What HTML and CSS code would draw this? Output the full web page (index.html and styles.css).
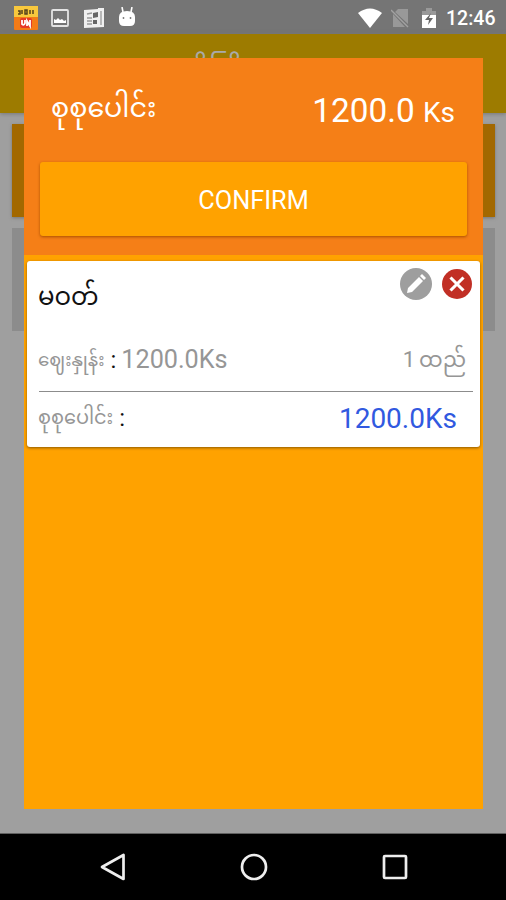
FILE: index.html
```html
<!DOCTYPE html>
<html lang="my">
<head>
<meta charset="utf-8">
<title>Order</title>
<link rel="stylesheet" href="styles.css">
</head>
<body>
<div class="screen">
  <header class="status">
    <svg class="app" viewBox="0 0 24 24"><rect width="24" height="24" rx="1" fill="#f47b16"/><rect width="24" height="11" fill="#f8c83d"/><path d="M4 5h2v3H4M8 4v4m3-4h2v4h-2zM16 4v4m3-4v4" fill="none" stroke="#54421d" stroke-width="1.5"/><rect x="6" y="12" width="12" height="10" rx="2" fill="#e63a28"/><path d="M8 14v4q2 2 3-1v-3m2 6v-5l3 5v-6" fill="none" stroke="#fff" stroke-width="1.8"/></svg>
    <svg class="photo" viewBox="0 0 18 18"><rect x="1" y="1" width="16" height="16" rx="1" fill="none" stroke="#e4e4e4" stroke-width="1.8"/><path d="M3 14v-4l2 1 2-2 2 2 2-1 2 2 2-1v3z" fill="#fff"/></svg>
    <svg class="news" viewBox="0 0 22 22"><path d="M1 3l14-1V1h6v19l-20 1z" fill="#f0f0f0"/><path d="M4 7l5-1M4 11h5M4 14h5M4 17h5M18 4v14" stroke="#999" stroke-width="1.3"/><path d="M10 6l5-1v5l-5 1zM10 13h4v4h-4z" fill="#666"/></svg>
    <svg class="droid" viewBox="0 0 18 20"><path d="M4 0l1 5M14 0l-1 5" stroke="#fff" stroke-width="1.6"/><path d="M1 10q0-6 8-6t8 6v4q0 5-5 5H6q-5 0-5-5z" fill="#fff"/><circle cx="5.500" cy="11" r=".9" fill="#777"/><circle cx="12.500" cy="11" r=".9" fill="#777"/></svg>
    <svg class="wifi" viewBox="0 0 26 20"><path d="M1 5Q13-4 25 5L13 20z" fill="#fff"/></svg>
    <svg class="sim" viewBox="0 0 18 20"><path d="M7 1h10v15L4 4zM2 6l12 13H2z" fill="#999"/><path d="M0 2l17 17" stroke="#a2a2a2" stroke-width="1.4"/></svg>
    <svg class="battery" viewBox="0 0 14 20"><path d="M0 3h4V0h6v3h4v4H0z" fill="#999"/><path d="M0 7h14v13H0z" fill="#fff"/><path d="M9 5l-6 7h4l-1 5 5-7H7z" fill="#666"/></svg>
    <span class="clock">12:46</span>
  </header>
  <main class="page">
    <div class="toolbar"><span>ပိုကြို</span></div>
    <div class="tile tile-active"></div>
    <div class="tile"></div>
    <section class="dialog">
      <div class="summary">
        <div class="total"><span class="my">စုစုပေါင်း</span><span class="amount">1200.0 <small>Ks</small></span></div>
        <button class="confirm">CONFIRM</button>
      </div>
      <article class="card">
        <div class="title"><span class="name my">မဝတ်</span>
          <svg class="edit" viewBox="0 0 32 32"><circle cx="16" cy="16" r="16" fill="#9e9e9e"/><path d="M7 25l1-5L19 9l4 4-11 11zM20 8l2-2 4 4-2 2z" fill="#fff"/></svg>
          <svg class="remove" viewBox="0 0 30 30"><circle cx="15" cy="15" r="15" fill="#c12f25"/><path d="M8.500 8.500l13 13M21.500 8.500l-13 13" stroke="#fff" stroke-width="3.1"/></svg>
        </div>
        <div class="price"><span class="my">ဈေးနှုန်း</span><b>:</b><span class="rate">1200.0Ks</span><span class="qty">1</span><span class="unit my">ထည်</span></div>
        <div class="sum"><span class="my">စုစုပေါင်း</span><b>:</b><span class="value">1200.0Ks</span></div>
      </article>
    </section>
  </main>
  <nav class="nav">
    <svg viewBox="0 0 30 30"><path d="M25.500 3v24L4 15z"/></svg>
    <svg viewBox="0 0 30 30"><circle cx="15" cy="15" r="12"/></svg>
    <svg viewBox="0 0 30 30"><rect x="4" y="4" width="22" height="22" rx="1"/></svg>
  </nav>
</div>
</body>
</html>
```
FILE: styles.css
```css
* { box-sizing: border-box; }
body { margin: 0; font-family: Roboto, "Noto Sans Myanmar", Padauk, sans-serif; }
svg { display: block; flex: none; }
.screen { width: 506px; height: 900px; display: flex; flex-direction: column; overflow: hidden; }
.status { height: 34px; background: #757575; display: flex; align-items: center; padding: 2px 11px 0 14px; color: #fff; }
.app { width: 24px; height: 24px; }
.photo { width: 18px; height: 18px; margin-left: 13px; }
.news { width: 22px; height: 22px; margin-left: 14px; }
.droid { width: 18px; height: 20px; margin: -3px 0 0 13px; }
.wifi { width: 26px; height: 20px; margin-left: auto; }
.sim { width: 18px; height: 20px; margin-left: 8px; }
.battery { width: 14px; height: 20px; margin-left: 13px; }
.clock { font-size: 19.5px; font-weight: 500; width: 49px; margin-left: 10px; }
.page { position: relative; height: 800px; background: #9f9f9f; border-bottom: 1px solid #606060; }
.toolbar { height: 79px; background: #9d7b00; box-shadow: 0 1px 4px #777; padding: 17px 0 0 192px; color: #aaa; font-size: 25px; line-height: 36px; }
.tile { height: 103px; margin: 11px 11px 0 12px; background: #8c8c8c; }
.tile-active { height: 93px; background: #a26800; box-shadow: 0 1px 3px #777; }
.dialog { position: absolute; left: 24px; right: 23px; top: 24px; height: 751px; background: #ffa200; }
.summary { height: 197px; background: #f57f17; padding: 26px 16px 0; }
.total { height: 78px; padding: 0 12px 0 11px; display: flex; justify-content: space-between; color: #fff; font-size: 27px; line-height: 48px; }
.amount { font-size: 33.3px; line-height: 54px; }
.amount small { font-size: 28px; }
.confirm { display: block; width: 100%; height: 74px; border: 0; border-radius: 3px; background: #ffa200; color: #fff; font: 25.3px/74px Roboto; padding: 2px 0 0; box-shadow: 0 1px 3px #a95000; }
.card { margin: 6px 3px 0; height: 186px; border-radius: 3px; background: #fff; box-shadow: 0 1px 3px #8a5800; padding: 0 7px 0 12px; color: #969696; }
.title { display: flex; height: 75px; padding-right: 1px; }
.name { color: #111; font-size: 24.5px; line-height: 72px; margin: 0 auto 0 -1px; }
.edit { width: 32px; height: 32px; margin: 7px 10px 0 0; }
.remove { width: 30px; height: 30px; margin-top: 8px; }
.price, .sum { display: flex; height: 56px; align-items: center; }
.price { border-bottom: 1px solid #8c8c8c; padding-right: 7px; padding-bottom: 8px; }
.sum { padding-bottom: 4px; }
.my { white-space: nowrap; }
.price .my { font-size: 18.3px; line-height: 44px; margin-left: -1px; }
.price .unit { font-size: 21px; margin-left: 0; }
.sum .my { font-size: 19.3px; line-height: 44px; margin-left: -1px; }
.price b, .sum b { color: #111; font-weight: 400; font-size: 24px; margin: 0 5px 0 6px; }
.rate { font-size: 25.2px; margin-right: auto; }
.qty { font-size: 22px; margin-right: 4px; }
.value { margin-left: auto; font-size: 28px; color: #3159e0; padding-right: 16px; }
.nav { height: 66px; background: #000; display: flex; justify-content: center; align-items: center; gap: 111px; padding-left: 1px; }
.nav svg { width: 30px; height: 30px; fill: none; stroke: #eee; stroke-width: 2.7; stroke-linejoin: round; }
```
